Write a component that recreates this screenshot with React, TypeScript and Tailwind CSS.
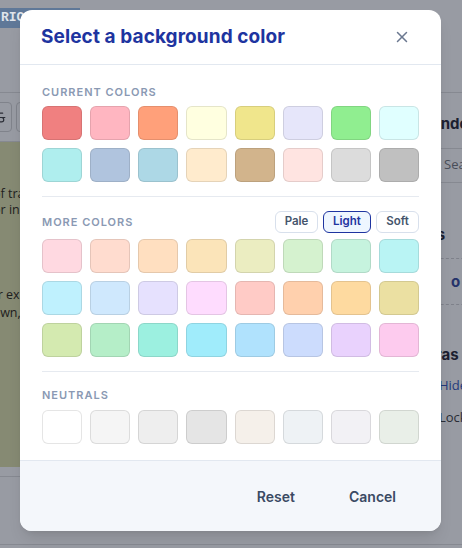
import { X, Strikethrough } from "lucide-react";

const currentColors = [
  "#F08080", "#FFB6C1", "#FFA07A", "#FFFFE0", "#F0E68C", "#E6E6FA", "#90EE90", "#E0FFFF",
  "#AFEEEE", "#B0C4DE", "#ADD8E6", "#FFEBCD", "#D2B48C", "#FFE4E1", "#DCDCDC", "#C0C0C0",
];

const lightColors = [
  "#ffd9e1", "#ffdccf", "#ffdfc0", "#fbe4b9", "#ebedc1", "#d5f2cf", "#c6f3de", "#b9f4f4",
  "#bff1fe", "#cfe8fd", "#e6e1fe", "#fedcfe", "#ffcbc6", "#ffd0ad", "#fedaa0", "#ebe0a2",
  "#d4eab0", "#b5eec8", "#9cf0e0", "#a0ecfb", "#b0e2fd", "#ccdcfd", "#e9d2fd", "#fdcbee",
];

const neutrals = ["#ffffff", "#f5f5f5", "#eeeeee", "#e5e5e5", "#f5f0ea", "#eef2f5", "#f2f1f5", "#e9efe8"];

function Swatch({ color }: { color: string }) {
  return (
    <button
      className="h-[34px] rounded-md border border-black/10"
      style={{ backgroundColor: color }}
      aria-label={color}
    />
  );
}

function SectionLabel({ children }: { children: string }) {
  return (
    <div className="text-[11px] font-semibold uppercase tracking-[0.09em] leading-4 text-[#8a99b3]">
      {children}
    </div>
  );
}

function Grid({ colors }: { colors: string[] }) {
  return (
    <div className="grid grid-cols-8 gap-2">
      {colors.map((c, i) => (
        <Swatch key={i} color={c} />
      ))}
    </div>
  );
}

function Page() {
  return (
    <div className="flex h-[548px] w-[462px] bg-[#989ba3] text-[#1e2230] overflow-hidden">
      {/* editor column */}
      <div className="flex w-[420px] shrink-0 flex-col">
        <div className="h-[8px]" />
        <div className="flex h-[20px] w-[80px] items-center bg-[#5f7898] pl-[1px] font-['Liberation_Mono',monospace] text-[13px] font-bold text-[#dfe4ea]">
          RICH
        </div>
        <div className="h-[65px] border-b border-[#868991]" />
        <div className="flex h-[49px] items-center gap-1 border-b border-[#868991]">
          <div className="-ml-[18px] flex h-[30px] w-[30px] items-center justify-end rounded border border-[#80838b] pr-[4px]">
            <Strikethrough size={13} strokeWidth={2.2} className="text-[#2a2d36]" />
          </div>
          <div className="h-[30px] w-[30px] rounded border border-[#80838b]" />
        </div>
        <div className="flex h-[325px] flex-col whitespace-nowrap bg-[#868a73] font-['Open_Sans',sans-serif] text-[12.5px] leading-[16px] text-[#1e2020]">
          <div className="h-[44px]" />
          <div className="-ml-[7px]">of tracking</div>
          <div className="-ml-[7px]">or in this</div>
          <div className="h-[69px]" />
          <div className="-ml-[14px]">for example</div>
          <div className="mt-[2px] -ml-[15px]">down, so</div>
        </div>
        <div className="h-[10px] border-b border-[#868991]" />
      </div>

      {/* side panel */}
      <div className="flex flex-1 flex-col whitespace-nowrap font-['Open_Sans',sans-serif]">
        <div className="h-[93px] border-b border-[#868991]" />
        <div className="pt-[21px] pl-[1px] font-['Inter',sans-serif] text-[15px] font-bold leading-5 text-[#1b2030]">
          Window
        </div>
        <div className="mt-[14px] h-[35px] border-y border-[#868991] pl-[24px] pt-[6px] text-[13px] text-[#484d58]">
          Search
        </div>
        <div className="pt-[42px] -ml-[24px] font-['Inter',sans-serif] text-[15px] font-bold leading-5 text-[#1b2030]">
          Layers
        </div>
        <div className="mt-[13px] border-b border-dashed border-[#7e818a]" />
        <div className="pt-[13px] pl-[31px] font-['Inter',sans-serif] text-[15px] font-bold leading-5 text-[#25336a]">
          o
        </div>
        <div className="mt-[12px] border-b border-dashed border-[#7e818a]" />
        <div className="pt-[40px] -ml-[8px] font-['Inter',sans-serif] text-[15px] font-bold leading-5 text-[#1b2030]">
          Extras
        </div>
        <div className="pt-[10px] pl-[19px] text-[13px] leading-5 text-[#243a7c]">Hide</div>
        <div className="pt-[12px] pl-[19px] text-[13px] leading-5 text-[#2a2d36]">Lock</div>
      </div>
    </div>
  );
}

export default function App() {
  return (
    <div className="relative h-[548px] w-[462px] overflow-hidden font-['Inter',sans-serif]">
      <Page />
      <div className="absolute left-0 right-0 bottom-[3px] border-b border-[#868991]" />

      <div className="absolute left-[20px] top-[10px] flex h-[521px] w-[421px] flex-col overflow-hidden rounded-xl bg-white shadow-lg">
        <div className="flex h-[55px] shrink-0 items-center justify-between border-b border-[#e2e8f0] pl-[21px] pr-[30px]">
          <h2 className="text-[19px] font-bold tracking-[0.005em] text-[#1e34a0]">Select a background color</h2>
          <X size={18} strokeWidth={2} className="text-[#6b7890]" />
        </div>

        <div className="flex flex-1 flex-col px-[22px] pt-[19px]">
          <SectionLabel>Current colors</SectionLabel>
          <div className="mt-[6px]">
            <Grid colors={currentColors} />
          </div>

          <div className="mt-[14px] border-t border-[#e6eaf0]" />

          <div className="mt-[14px] flex items-center justify-between">
            <SectionLabel>More colors</SectionLabel>
            <div className="flex gap-[5px]">
              <button className="h-[22px] w-[43px] rounded-md border border-[#d8e0ec] text-[11.5px] font-semibold text-[#45556c]">
                Pale
              </button>
              <button className="h-[22px] w-[48px] rounded-md border border-[#1e34a0] bg-[#eef6ff] text-[11.5px] font-semibold text-[#1e34a0]">
                Light
              </button>
              <button className="h-[22px] w-[43px] rounded-md border border-[#d8e0ec] text-[11.5px] font-semibold text-[#45556c]">
                Soft
              </button>
            </div>
          </div>
          <div className="mt-[6px]">
            <Grid colors={lightColors} />
          </div>

          <div className="mt-[14px] border-t border-[#e6eaf0]" />

          <div className="mt-[15px]">
            <SectionLabel>Neutrals</SectionLabel>
          </div>
          <div className="mt-[7px]">
            <Grid colors={neutrals} />
          </div>
        </div>

        <div className="flex h-[71px] shrink-0 items-center justify-end gap-[14px] border-t border-[#e2e8f0] bg-[#f4f7fb] pr-[25px]">
          <button className="px-5 py-2.5 text-[14px] font-semibold text-[#3a4a63]">Reset</button>
          <button className="px-5 py-2.5 text-[14px] font-semibold text-[#3a4a63]">Cancel</button>
        </div>
      </div>
    </div>
  );
}
